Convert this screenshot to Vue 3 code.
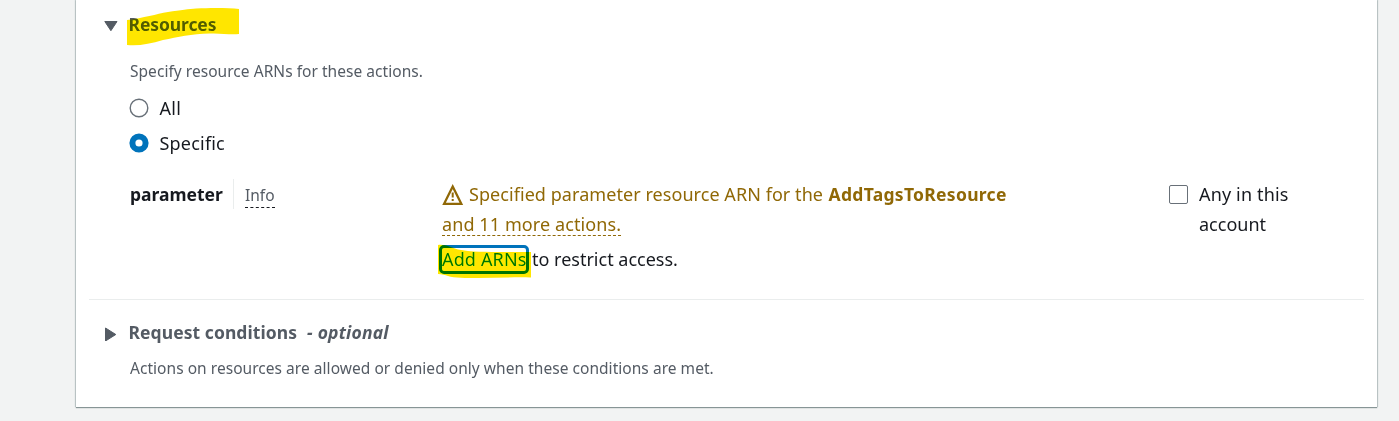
<script setup>
const choices = [
  { label: 'All', cls: 'all', on: false },
  { label: 'Specific', cls: 'specific', on: true },
]
</script>

<template>
  <main class="page">
    <section class="card">
      <header class="head resources">
        <svg class="caret" width="16" height="14" viewBox="0 0 16 14"><path d="M1.800 2.500H14L7.900 11.700Z" /></svg>
        <h3><span class="t-res">Resources</span></h3>
        <svg class="marker marker-res" width="114" height="40" viewBox="0 0 114 40">
          <path d="M1 14C18 12 30 8 42 6C55 4 63 3 70 2.500C88 1.500 104 2 113 3V28C104 29 95 27 84 27.500C65 28 52 31 37 34C24 38 13 40 1 39Z" />
        </svg>
      </header>
      <p class="hint hint-res"><span class="t-hint1">Specify resource ARNs for these actions.</span></p>
      <div class="choices">
        <label v-for="c in choices" :key="c.label" class="choice">
          <svg class="radio" :class="{ on: c.on }" width="20" height="20" viewBox="0 0 20 20"><circle cx="10" cy="10" :r="c.on ? 6.6 : 8.8" /></svg><span :class="'t-' + c.cls">{{ c.label }}</span>
        </label>
      </div>
      <div class="row">
        <div class="name">
          <b class="t-param">parameter</b><span class="bar"></span><span class="info t-info">Info</span>
        </div>
        <div class="detail">
          <div class="line warn">
            <svg class="alert" width="22" height="22" viewBox="0 0 22 22">
              <path class="edge" d="M10.700 2.600L19.300 19.800H2.100Z" />
              <path class="bang" d="M10.700 8.500V13.500M10.700 15V17" />
            </svg>
            <span class="t-spec">Specified parameter resource ARN for the</span><b class="t-tags">AddTagsToResource</b>
          </div>
          <div class="line warn"><span class="more t-more">and 11 more actions.</span></div>
          <div class="line add">
            <a class="link"><span class="t-add">Add ARNs</span></a><span class="t-restrict">to restrict access.</span>
            <svg class="marker marker-add" width="94" height="36" viewBox="0 0 94 36">
              <path d="M0 1C8 0 13 4 20 5.500C32 8 50 8 65 8H93V33.500C75 33 58 34 40 34C28 34 16 34 10 32C7 31 4 30 0 30Z" />
            </svg>
          </div>
        </div>
        <label class="any"><i class="box"></i><span class="any-text"><span class="t-any">Any in this</span><br><span class="t-acc">account</span></span></label>
      </div>
      <hr>
      <header class="head conditions">
        <svg class="caret" width="16" height="14" viewBox="0 0 16 14"><path d="M2.500 1V14L12.800 7.500Z" /></svg>
        <h3><span class="t-req">Request conditions</span><em class="t-opt">- optional</em></h3>
      </header>
      <p class="hint hint-cond"><span class="t-hint2">Actions on resources are allowed or denied only when these conditions are met.</span></p>
    </section>
  </main>
</template>

<style>
body { margin: 0; background: #f2f3f3; overflow: hidden; }
</style>
<style scoped>
* { box-sizing: border-box; }
.page { height: 421px; padding: 0 22px 0 76px; background: #f2f3f3; font-family: "Noto Sans", "Open Sans", sans-serif; font-size: 18px; line-height: 30px; color: #16191f; white-space: nowrap; }
.card { height: 407px; padding: 9px 13px 0; background: #fff; box-shadow: 0 1px 1px #879596, 1px 0 1px #c3cccd, -1px 0 1px #c3cccd; }
.head { position: relative; display: flex; height: 30px; padding-left: 14px; color: #545b64; }
.caret { margin-top: 10px; fill: #545b64; stroke: #545b64; stroke-width: 1; stroke-linejoin: round; flex: none; }
h3 { margin: 0 0 0 9.500px; font-size: 17.5px; font-weight: 700; line-height: 30px; }
b { font-size: 17.5px; }
.marker { position: absolute; fill: #ffe600; mix-blend-mode: darken; }
.marker-res { left: 37px; top: -3px; }
.marker-add { left: -4px; top: 0; }
.hint { margin: 0 0 0 41px; font-size: 15.500px; line-height: 20px; height: 20px; color: #545b64; letter-spacing: .04px; }
.hint-res { margin-top: 22px; }
.hint-cond { margin-top: 11px; }
.choices { display: flex; flex-direction: column; gap: 5px; margin: 12px 0 0 40px; }
.choice { display: flex; align-items: center; height: 30px; gap: 11px; }
.radio { margin-right: -.5px; fill: none; stroke: #687078; stroke-width: 1.400; }
.radio.on { stroke: #0073bb; stroke-width: 6; }
.row { display: grid; grid-template-columns: 312px 728px auto; margin: 21px 0 0 41px; height: 120px; }
.name { display: flex; height: 30px; }
.name b { width: 103px; }
.bar { width: 1px; height: 30px; background: #eaeded; }
.info { align-self: flex-start; margin: 5px 0 0 11px; font-size: 15.500px; line-height: 22px; height: 24px; color: #545b64; border-bottom: 1px dashed #16191f; }
.line { display: flex; height: 30px; }
.warn { color: #906806; }
.alert { margin: 5px 5px 0 0; flex: none; fill: none; stroke: #906806; }
.edge { stroke-width: 2.300; }
.bang { stroke-width: 2; }
.more { height: 27px; border-bottom: 1px dashed #906806; }
.add { position: relative; margin-top: 5px; }
.link { width: 90px; height: 29px; margin: 1px 3px 0 -3px; border: 3px solid #0073bb; border-radius: 5px; color: #0073bb; line-height: 22px; }
.any { display: flex; }
.box { width: 19px; height: 19px; margin: 6px 11px 0 -1px; border: 1.500px solid #687078; border-radius: 2px; }
hr { height: 1px; margin: 0; border: 0; background: #eaeded; }
.conditions { margin-top: 17px; }
.t-req { letter-spacing: .07px; }
.t-opt { margin-left: 10px; letter-spacing: .2px; }
.t-tags { margin-left: 5.500px; letter-spacing: .3px; }
.t-spec { letter-spacing: .06px; }
.t-more { letter-spacing: .1px; }
.t-add { letter-spacing: .15px; }
.t-any { letter-spacing: .15px; }
.t-all { letter-spacing: .3px; }
.t-specific { letter-spacing: .2px; }
.t-res { letter-spacing: -.1px; }
</style>
